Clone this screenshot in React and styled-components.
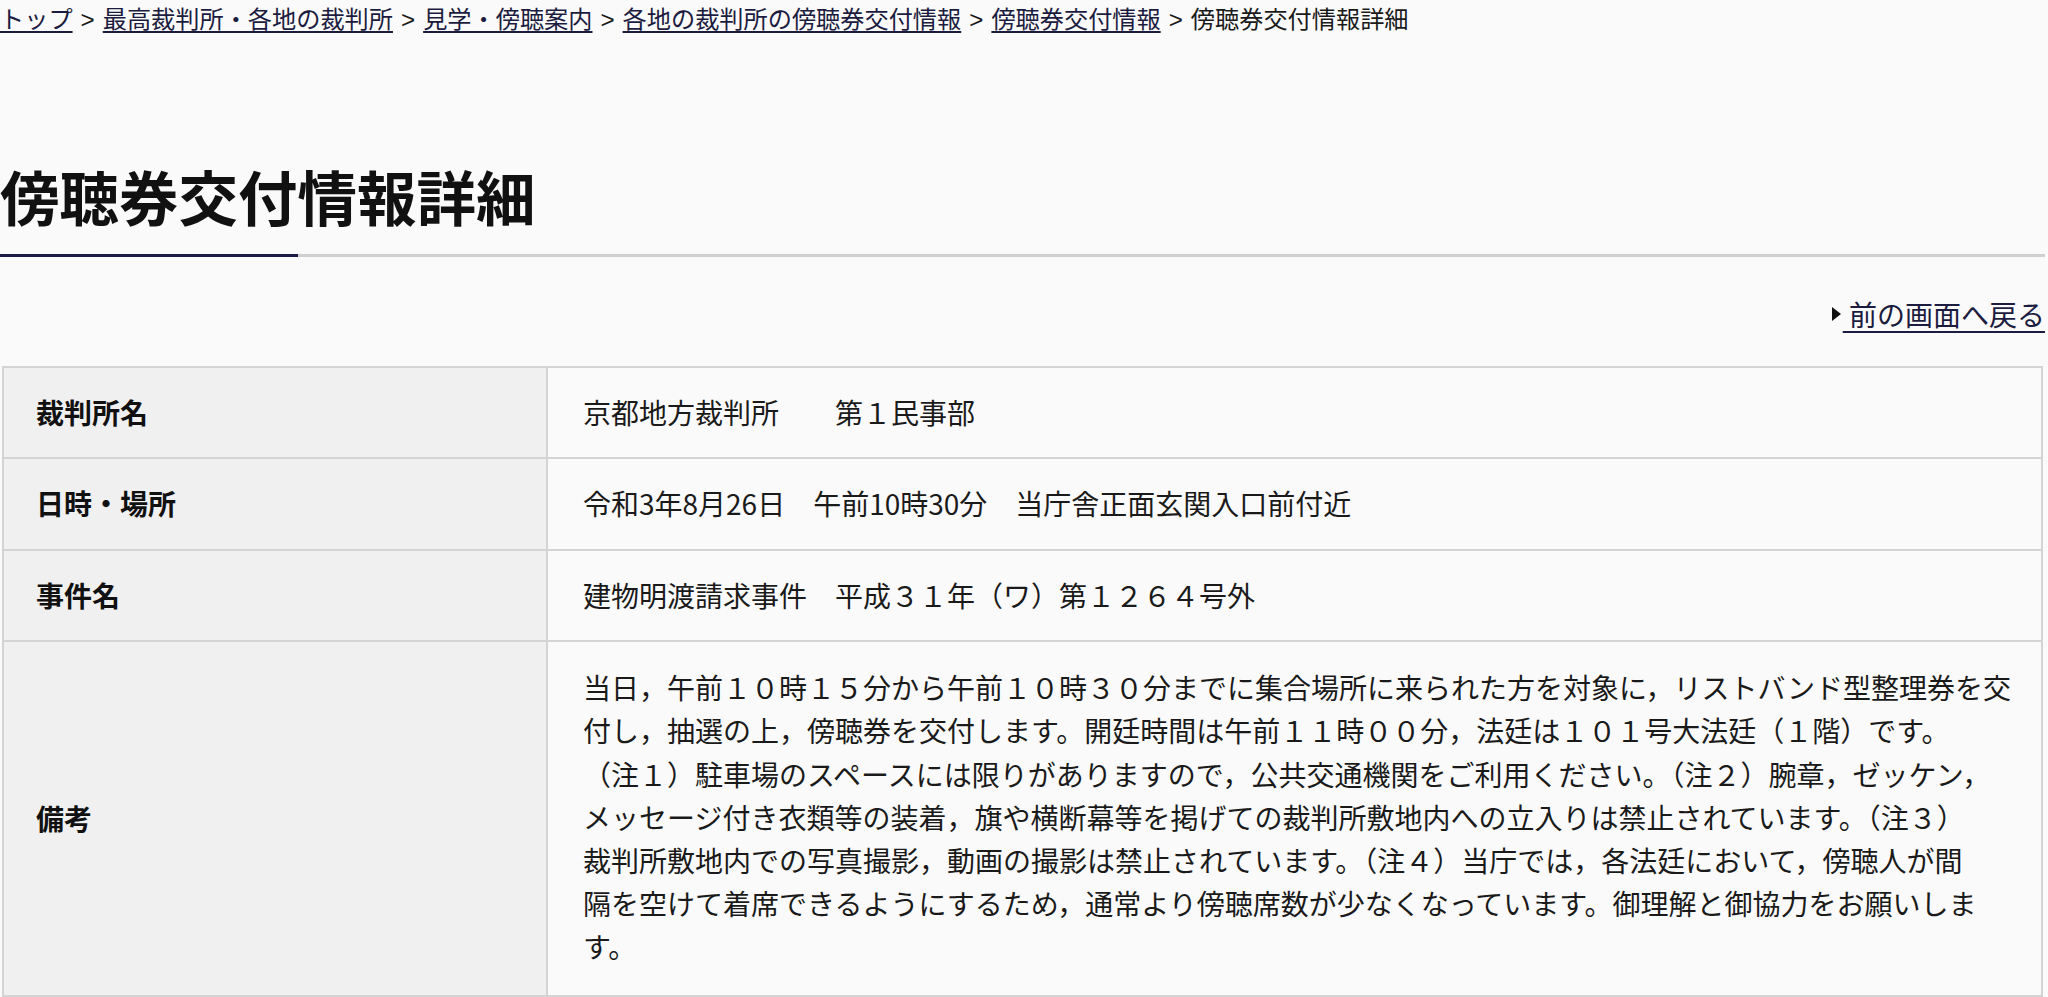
import React from "react";
import styled, { createGlobalStyle } from "styled-components";

const GlobalStyle = createGlobalStyle`
  html, body {
    margin: 0;
    padding: 0;
    background: #fafafa;
  }
  body {
    font-family: "Noto Sans CJK JP", "Noto Sans", sans-serif;
    color: #1a1a1a;
  }
`;

const Page = styled.div`
  width: 2045px;
  display: flex;
  flex-direction: column;
`;

const Breadcrumb = styled.nav`
  font-size: 24.2px;
  line-height: 36px;
  white-space: nowrap;
  color: #1a1a1a;
`;

const CrumbLink = styled.a`
  color: #1c1c40;
  text-decoration: underline;
  text-underline-offset: 3px;
`;

const Sep = styled.span`
  font-family: "Liberation Sans", sans-serif;
  margin: 0 8px;
`;

const TitleBlock = styled.header`
  margin-top: 117px;
  display: flex;
  flex-direction: column;
`;

const Title = styled.h1`
  margin: 0;
  font-size: 59.5px;
  line-height: 80px;
  font-weight: 700;
  color: #111;
`;

const TitleRule = styled.div`
  margin-top: 19px;
  height: 3px;
  background: linear-gradient(to right, #1b1b45 298px, #cfcfcf 298px);
`;

const BackRow = styled.div`
  margin-top: 37px;
  display: flex;
  justify-content: flex-end;
  align-items: center;
  font-size: 28px;
  line-height: 40px;
`;

const Triangle = styled.span`
  display: inline-block;
  width: 0;
  height: 0;
  border-top: 7px solid transparent;
  border-bottom: 7px solid transparent;
  border-left: 9px solid #111;
  margin-right: 2px;
`;

const BackLink = styled.a`
  color: #1c1c40;
  text-decoration: underline;
  text-underline-offset: 5px;
  white-space: pre;
`;

const Table = styled.table`
  margin-top: 32px;
  margin-left: 2px;
  width: 2041px;
  border-collapse: collapse;
  border: 2px solid #d4d4d4;
`;

const Row = styled.tr``;

const Label = styled.th`
  width: 476px;
  background: #f0f0f0;
  border: 2px solid #d4d4d4;
  padding: 23px 34px 23px 32px;
  text-align: left;
  font-size: 28px;
  line-height: 43.4px;
  font-weight: 700;
  color: #111;
`;

const Value = styled.td`
  background: #fafafa;
  border: 2px solid #d4d4d4;
  padding: ${(p) => (p.$multi ? "24px 16px 26px 35px" : "23px 16px 23px 35px")};
  font-size: 28px;
  line-height: 43.4px;
  color: #1a1a1a;
  vertical-align: middle;
`;

const Line = styled.span`
  display: block;
  height: 43.2px;
  white-space: nowrap;
`;

const crumbs = [
  "トップ",
  "最高裁判所・各地の裁判所",
  "見学・傍聴案内",
  "各地の裁判所の傍聴券交付情報",
  "傍聴券交付情報",
];

const noteLines = [
  "当日，午前１０時１５分から午前１０時３０分までに集合場所に来られた方を対象に，リストバンド型整理券を交",
  "付し，抽選の上，傍聴券を交付します。開廷時間は午前１１時００分，法廷は１０１号大法廷（１階）です。",
  "（注１）駐車場のスペースには限りがありますので，公共交通機関をご利用ください。（注２）腕章，ゼッケン，",
  "メッセージ付き衣類等の装着，旗や横断幕等を掲げての裁判所敷地内への立入りは禁止されています。（注３）",
  "裁判所敷地内での写真撮影，動画の撮影は禁止されています。（注４）当庁では，各法廷において，傍聴人が間",
  "隔を空けて着席できるようにするため，通常より傍聴席数が少なくなっています。御理解と御協力をお願いしま",
  "す。",
];

export default function App() {
  return (
    <>
      <GlobalStyle />
      <Page>
        <Breadcrumb>
          {crumbs.map((c) => (
            <React.Fragment key={c}>
              <CrumbLink href="#">{c}</CrumbLink>
              <Sep>&gt;</Sep>
            </React.Fragment>
          ))}
          <span>傍聴券交付情報詳細</span>
        </Breadcrumb>

        <TitleBlock>
          <Title>傍聴券交付情報詳細</Title>
          <TitleRule />
        </TitleBlock>

        <BackRow>
          <Triangle />
          <BackLink href="#">{" 前の画面へ戻る"}</BackLink>
        </BackRow>

        <Table>
          <tbody>
            <Row>
              <Label>裁判所名</Label>
              <Value>京都地方裁判所　　第１民事部</Value>
            </Row>
            <Row>
              <Label>日時・場所</Label>
              <Value>令和3年8月26日　午前10時30分　当庁舎正面玄関入口前付近</Value>
            </Row>
            <Row>
              <Label>事件名</Label>
              <Value>建物明渡請求事件　平成３１年（ワ）第１２６４号外</Value>
            </Row>
            <Row>
              <Label>備考</Label>
              <Value $multi>
                {noteLines.map((l, i) => (
                  <Line key={i}>{l}</Line>
                ))}
              </Value>
            </Row>
          </tbody>
        </Table>
      </Page>
    </>
  );
}
